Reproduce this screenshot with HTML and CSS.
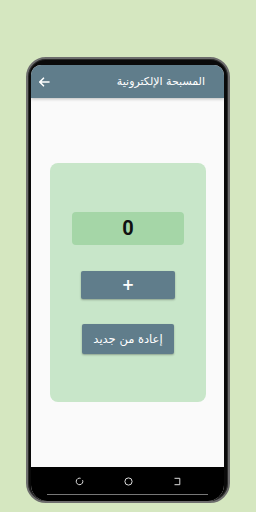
FILE: index.html
```html
<!DOCTYPE html>
<html lang="ar">
<head>
<meta charset="utf-8">
<link rel="stylesheet" href="styles.css">
</head>
<body>
<div class="phone">
  <div class="screen">
    <header class="appbar">
      <svg class="back" width="12" height="10" viewBox="0 0 12 10"><path d="M11 5H2M5.5 1.2L1.7 5l3.8 3.8" fill="none" stroke="#fff" stroke-width="1.6" stroke-linecap="round" stroke-linejoin="round"/></svg>
      <h1 class="title" dir="rtl">المسبحة الإلكترونية</h1>
    </header>
    <main class="content">
      <section class="card">
        <div class="counter">0</div>
        <button class="btn btn-plus">+</button>
        <button class="btn btn-reset" dir="rtl">إعادة من جديد</button>
      </section>
    </main>
    <nav class="navbar">
      <div class="navicons">
        <svg width="9" height="9" viewBox="0 0 9 9"><path d="M7.6 3.2A3.3 3.3 0 1 1 5.6 1.3" fill="none" stroke="#ddd" stroke-width="1"/></svg>
        <svg width="9" height="9" viewBox="0 0 9 9"><circle cx="4.5" cy="4.5" r="3.6" fill="none" stroke="#ddd" stroke-width="1"/></svg>
        <svg width="9" height="9" viewBox="0 0 9 9"><path d="M1.5 1.3H6.8V7.7H1.5" fill="none" stroke="#ddd" stroke-width="1"/></svg>
      </div>
      <div class="navline"></div>
    </nav>
  </div>
</div>
</body>
</html>
```
FILE: styles.css
```css
html, body {
  margin: 0;
  padding: 0;
}
body {
  background: #d5e7c0;
  width: 256px;
  height: 512px;
  overflow: hidden;
  font-family: "DejaVu Sans", "Noto Sans", sans-serif;
}
.phone {
  margin: 57px 0 0 26px;
  width: 204px;
  height: 446px;
  box-sizing: border-box;
  padding: 6px 6px 0 5px;
  background: #0a0a0a;
  border-radius: 20px;
  border: 2px solid #6d6d6d;
  box-shadow: inset 0 0 0 1px #2a2a2a;
  display: flex;
}
.screen {
  flex: 1;
  display: flex;
  flex-direction: column;
  background: #fafafa;
  border-radius: 10px 10px 16px 16px;
  overflow: hidden;
  margin-left: -2px;
  margin-right: -2px;
}
.appbar {
  height: 33px;
  flex: none;
  background: #607d8b;
  display: flex;
  align-items: center;
  justify-content: space-between;
  padding: 0 19px 0 7px;
  box-shadow: 0 1px 3px rgba(0,0,0,0.25);
  position: relative;
  z-index: 1;
}
.back {
  display: block;
}
.title {
  margin: 0;
  color: #fff;
  font-size: 11px;
  font-weight: normal;
}
.content {
  flex: 1;
  display: flex;
  align-items: center;
  justify-content: center;
  padding-left: 1px;
}
.card {
  width: 156px;
  height: 239px;
  box-sizing: border-box;
  background: #c8e6c9;
  border-radius: 8px;
  display: flex;
  flex-direction: column;
  align-items: center;
  justify-content: center;
  gap: 26px;
}
.counter {
  width: 112px;
  height: 33px;
  background: #a5d6a7;
  border-radius: 4px;
  display: flex;
  align-items: center;
  justify-content: center;
  font-family: Roboto, "Noto Sans", sans-serif;
  font-weight: 700;
  font-size: 20px;
  color: #111;
}
.btn {
  border: none;
  background: #607d8b;
  color: #fff;
  border-radius: 2px;
  box-shadow: 0 1px 2px rgba(0,0,0,0.3);
  padding: 0;
  display: flex;
  align-items: center;
  justify-content: center;
}
.btn-plus {
  width: 94px;
  height: 28px;
  font-family: "DejaVu Sans", sans-serif;
  font-weight: 700;
  font-size: 15px;
}
.btn-reset {
  width: 92px;
  height: 30px;
  font-family: "DejaVu Sans", sans-serif;
  font-size: 11.5px;
  margin-top: -1px;
}
.navbar {
  height: 34px;
  flex: none;
  background: #000;
  display: flex;
  flex-direction: column;
  align-items: center;
}
.navicons {
  display: flex;
  gap: 40px;
  margin-top: 10px;
  margin-left: 1px;
}
.navicons svg {
  display: block;
}
.navline {
  width: 161px;
  height: 1px;
  background: #777;
  margin-top: 8px;
}
```
